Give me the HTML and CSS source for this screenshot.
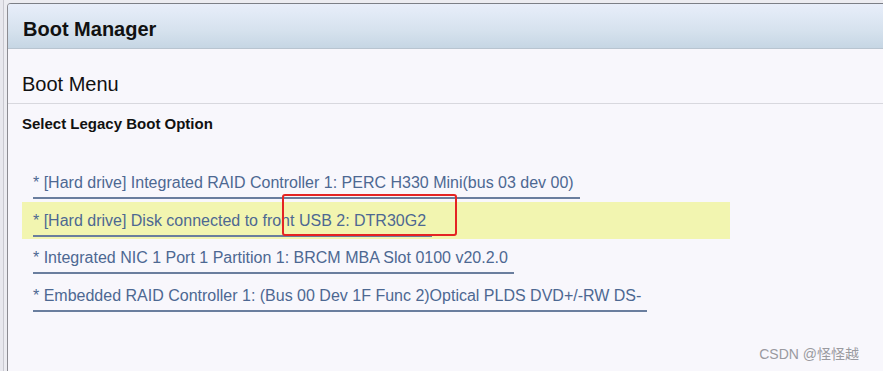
FILE: index.html
```html
<!DOCTYPE html>
<html lang="en">
<head>
    <meta charset="UTF-8">
    <title>Boot Manager</title>
    <link rel="stylesheet" href="styles.css">
</head>
<body>
    <div class="window">
        <div class="header">Boot Manager</div>
        <div class="menu-title">Boot Menu</div>
        <div class="content">
            <div class="section">Select Legacy Boot Option</div>
            <div class="options">
                <div class="option"><span class="link">* [Hard drive] Integrated RAID Controller 1: PERC H330 Mini(bus 03 dev 00)</span></div>
                <div class="option selected">
                    <span class="link">* [Hard drive] Disk connected to front USB 2: DTR30G2</span>
                    <span class="mark"></span>
                </div>
                <div class="option"><span class="link">* Integrated NIC 1 Port 1 Partition 1: BRCM MBA Slot 0100 v20.2.0</span></div>
                <div class="option"><span class="link">* Embedded RAID Controller 1: (Bus 00 Dev 1F Func 2)Optical PLDS DVD+/-RW DS-</span></div>
            </div>
        </div>
        <div class="watermark">CSDN @怪怪越</div>
    </div>
</body>
</html>
```

FILE: styles.css
```css
html, body {
    height: 100%;
}
body {
    margin: 0;
    background: linear-gradient(to right, #e8e8ee 3px, #c9c9d0 3px, #c9c9d0 4px, #ececf1 4px);
    font-family: 'Liberation Sans', Arial, sans-serif;
    overflow: hidden;
}
.window {
    position: relative;
    margin: 3px 0 0 7px;
    height: calc(100% - 3px);
    background: #f8f7fc;
    border-top: 1px solid #7c7f86;
    border-left: 1px solid #8c8c92;
    border-top-left-radius: 4px;
}
.header {
    height: 44px;
    padding-left: 15px;
    line-height: 50px;
    font-size: 20px;
    font-weight: bold;
    color: #111;
    background: linear-gradient(#e8eefa, #d6e2ee 60%, #c6d6e4);
    border-bottom: 1px solid #b8c4d0;
    border-top-left-radius: 3px;
    overflow: hidden;
}
.menu-title {
    height: 31px;
    padding: 23px 0 0 14px;
    line-height: 24px;
    font-size: 20px;
    color: #111;
    border-bottom: 1px solid #d8d8de;
}
.content {
    padding: 10px 0 0 14px;
}
.section {
    font-size: 15px;
    font-weight: bold;
    color: #111;
    line-height: 20px;
}
.options {
    margin-top: 30px;
    width: 708px;
}
.option {
    position: relative;
    height: 38px;
    padding-left: 11px;
}
.option .link {
    display: inline-block;
    margin-top: 9px;
    padding: 0 6px 4px 0;
    font-size: 16px;
    line-height: 20px;
    color: #4d6892;
    border-bottom: 2px solid #6a7e9e;
}
.selected {
    height: 37px;
    background: #f2f5b0;
}
.mark {
    position: absolute;
    left: 260px;
    top: -8px;
    width: 171px;
    height: 38px;
    border: 2px solid #e42424;
    border-radius: 3px;
}
.watermark {
    position: absolute;
    right: 24px;
    bottom: 9px;
    font-family: 'Liberation Sans', 'Noto Sans CJK SC', sans-serif;
    font-size: 14px;
    color: #9a9aa0;
}
```
